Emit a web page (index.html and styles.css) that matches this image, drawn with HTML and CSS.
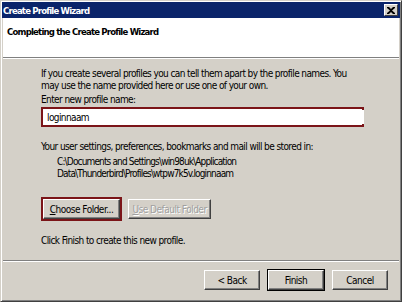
FILE: index.html
```html
<!DOCTYPE html>
<html lang="en">
<head>
    <meta charset="UTF-8">
    <title>Create Profile Wizard</title>
    <link rel="stylesheet" href="styles.css">
</head>
<body>

<div class="window">

    <!-- title bar -->
    <div class="titlebar">
        <span class="title">Create Profile Wizard</span>
        <span class="close">
            <svg width="8" height="7" viewBox="0 0 8 7">
                <path d="M0 0h2l2 2 2-2h2v1L5 3.5 8 6v1H6L4 5 2 7H0V6l3-2.5L0 1z" fill="#000"/>
            </svg>
        </span>
    </div>

    <!-- white header -->
    <div class="header">
        <h1>Completing the Create Profile Wizard</h1>
    </div>

    <div class="content">
        <p class="intro">If you create several profiles you can tell them apart by the profile names. You<br>may use the name provided here or use one of your own.</p>
        <label class="label">Enter new profile name:</label>
        <div class="focus-ring field-ring">
            <input class="field" type="text" value="loginnaam">
        </div>

        <p class="stored">Your user settings, preferences, bookmarks and mail will be stored in:</p>
        <p class="path">C:\Documents and Settings\win98uk\Application<br>Data\Thunderbird\Profiles\wtpw7k5v.loginnaam</p>

        <div class="folder-row">
            <div class="focus-ring btn-ring">
                <button class="btn btn-choose"><u>C</u>hoose Folder...</button>
            </div>
            <button class="btn btn-default" disabled><u>U</u>se Default Folder</button>
        </div>

        <p class="finish-note">Click Finish to create this new profile.</p>
    </div>

    <!-- buttons -->
    <div class="footer">
        <button class="btn btn-nav">&lt; Back</button>
        <button class="btn btn-nav btn-main">Finish</button>
        <button class="btn btn-nav">Cancel</button>
    </div>

</div>

</body>
</html>
```

FILE: styles.css
```css
body {
    margin: 0;
    background-color: #d4d0c8;
    font-family: "DejaVu Sans Condensed", "DejaVu Sans", sans-serif;
    font-stretch: condensed;
    font-size: 10px;
    letter-spacing: -0.6px;
    color: #000;
}

.window {
    width: 402px;
    height: 302px;
    box-sizing: border-box;
    border: 1px solid #d4d0c8;
    border-right-color: #404040;
    border-bottom-color: #404040;
    box-shadow: inset 1px 1px 0 #fff, inset -1px -1px 0 #808080;
    padding: 2px;
    display: flex;
    flex-direction: column;
}

.titlebar {
    height: 16px;
    background-color: #0a246a;
    display: flex;
    align-items: center;
    justify-content: space-between;
    padding: 0 2px 0 1px;
    margin: -1px -1px 0 -1px;
}

.title {
    color: #fff;
    font-weight: bold;
    font-size: 9.5px;
    letter-spacing: -0.8px;
}

.close {
    width: 14px;
    height: 12px;
    background-color: #d4d0c8;
    box-sizing: border-box;
    border: 1px solid #fff;
    border-right-color: #404040;
    border-bottom-color: #404040;
    display: flex;
    align-items: center;
    justify-content: center;
}

.header {
    background-color: #fff;
    height: 39px;
    border-bottom: 1px solid #808080;
    box-shadow: 0 1px 0 #fff;
    padding: 0 4px;
}

.header h1 {
    margin: 0;
    padding-top: 8px;
    font-size: 9.5px;
    font-weight: bold;
    letter-spacing: -0.8px;
}

.content {
    flex: 1;
    padding: 10px 0 0 38px;
    white-space: nowrap;
}

p {
    margin: 0;
}

.intro {
    line-height: 12px;
}

.label {
    display: block;
    margin-top: 1px;
    line-height: 13px;
}

.focus-ring {
    border: 2px solid #7b1418;
    box-sizing: border-box;
    display: inline-block;
}

.field-ring {
    width: 323px;
    height: 20px;
    margin-top: 1px;
    padding: 1px;
    background-color: #fff;
}

.field {
    border: 0;
    outline: none;
    width: 100%;
    height: 14px;
    padding: 0 0 0 3px;
    font-family: inherit;
    font-stretch: condensed;
    font-size: 10px;
    letter-spacing: -0.6px;
    color: #000;
    background: #fff;
}

.stored {
    margin-top: 13px;
    line-height: 13px;
}

.path {
    margin: 3px 0 0 16px;
    line-height: 12px;
    letter-spacing: -0.85px;
}

.folder-row {
    display: flex;
    align-items: center;
    gap: 6px;
    margin-top: 17px;
}

.btn {
    font-family: inherit;
    font-stretch: condensed;
    font-size: 10px;
    letter-spacing: -0.5px;
    white-space: nowrap;
    color: #000;
    background-color: #d4d0c8;
    border: 1px solid #fff;
    border-right-color: #404040;
    border-bottom-color: #404040;
    box-shadow: inset -1px -1px 0 #808080;
    padding: 0;
    height: 20px;
}

.btn-ring {
    padding: 0;
}

.btn-choose {
    display: block;
    width: 77px;
}

.btn-default {
    width: 83px;
    color: #a0a0a0;
    text-shadow: 1px 1px 0 #fff;
}

.finish-note {
    margin-top: 13px;
    line-height: 13px;
}

.footer {
    height: 38px;
    border-top: 1px solid #808080;
    box-shadow: inset 0 1px 0 #fff;
    display: flex;
    justify-content: flex-end;
    align-items: center;
    gap: 8px;
    padding: 0 11px 0 0;
}

.btn-nav {
    width: 56px;
    height: 20px;
}

.btn-main {
    outline: 1px solid #000;
}
```
